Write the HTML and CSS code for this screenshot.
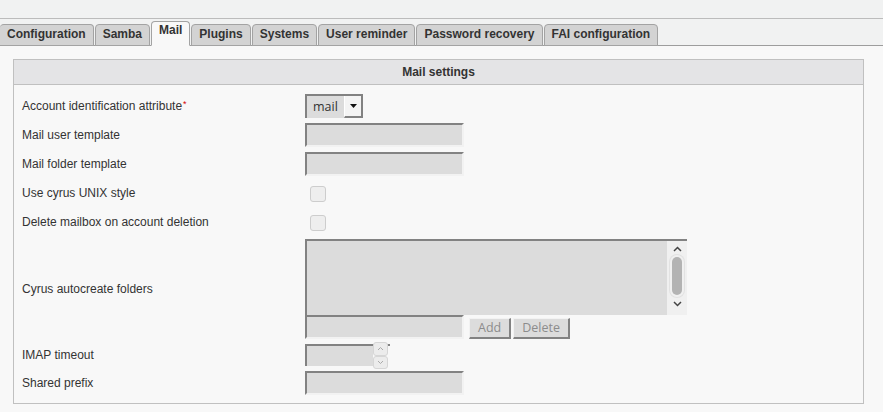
FILE: index.html
```html
<!DOCTYPE html>
<html>
<head>
    <title>Mail settings</title>
    <link rel="stylesheet" href="styles.css">
</head>
<body>
    <div class="topbar"></div>

    <div class="tabs">
      <div class="tab">Configuration</div>
      <div class="tab">Samba</div>
      <div class="tab active">Mail</div>
      <div class="tab">Plugins</div>
      <div class="tab">Systems</div>
      <div class="tab">User reminder</div>
      <div class="tab">Password recovery</div>
      <div class="tab">FAI configuration</div>
    </div>

    <div class="panel">
      <div class="panel-head">Mail settings</div>
      <div class="panel-body">

        <div class="row">
          <div class="label">Account identification attribute<span class="req">*</span></div>
          <div class="field">
            <div class="select">
              <span class="select-value">mail</span>
              <span class="select-btn">
                <svg width="7" height="4" viewBox="0 0 7 4"><path d="M0 0 L7 0 L3.5 4 Z" fill="#111"/></svg>
              </span>
            </div>
          </div>
        </div>

        <div class="row">
          <div class="label">Mail user template</div>
          <div class="field"><div class="input"></div></div>
        </div>

        <div class="row">
          <div class="label">Mail folder template</div>
          <div class="field"><div class="input"></div></div>
        </div>

        <div class="row">
          <div class="label">Use cyrus UNIX style</div>
          <div class="field"><div class="check"></div></div>
        </div>

        <div class="row">
          <div class="label">Delete mailbox on account deletion</div>
          <div class="field"><div class="check"></div></div>
        </div>

        <div class="row row--tall">
          <div class="label">Cyrus autocreate folders</div>
          <div class="field field--stack">
            <div class="textarea">
              <div class="scrollbar">
                <svg class="chev" width="9" height="6" viewBox="0 0 9 6"><path d="M1 5 L4.5 1.5 L8 5" fill="none" stroke="#444" stroke-width="1.5"/></svg>
                <span class="thumb"></span>
                <svg class="chev chev--down" width="9" height="6" viewBox="0 0 9 6"><path d="M1 1 L4.5 4.5 L8 1" fill="none" stroke="#444" stroke-width="1.5"/></svg>
              </div>
            </div>
            <div class="addline">
              <div class="input"></div>
              <span class="btn">Add</span>
              <span class="btn">Delete</span>
            </div>
          </div>
        </div>

        <div class="row row--short">
          <div class="label">IMAP timeout</div>
          <div class="field">
            <div class="number">
              <div class="number-box"></div>
              <div class="spin">
                <span class="spin-btn">
                  <svg width="7" height="5" viewBox="0 0 7 5"><path d="M1 4 L3.5 1.5 L6 4" fill="none" stroke="#aaa" stroke-width="1"/></svg>
                </span>
                <span class="spin-btn">
                  <svg width="7" height="5" viewBox="0 0 7 5"><path d="M1 1 L3.5 3.5 L6 1" fill="none" stroke="#aaa" stroke-width="1"/></svg>
                </span>
              </div>
            </div>
          </div>
        </div>

        <div class="row">
          <div class="label">Shared prefix</div>
          <div class="field"><div class="input"></div></div>
        </div>

      </div>
    </div>
</body>
</html>
```

FILE: styles.css
```css
html, body {
  margin: 0;
}

body {
  background-color: #f8f8f8;
  font-family: "Liberation Sans", Arial, sans-serif;
  font-size: 12px;
  color: #333;
}

.topbar {
  height: 18px;
  background-color: #f1f2f2;
  border-bottom: 1px solid #bcbcbc;
}

/* tab strip */

.tabs {
  display: flex;
  align-items: flex-end;
  height: 26px;
  background-color: #f1f2f2;
  border-bottom: 1px solid #9d9d9d;
}

.tab {
  height: 20px;
  line-height: 19px;
  padding: 0 7px;
  margin-bottom: -1px;
  margin-right: 1px;
  background-color: #d3d3d3;
  border: 1px solid #a3a3a3;
  border-radius: 4px 4px 0 0;
  font-weight: bold;
  color: #333;
  white-space: nowrap;
}

.tab:first-child {
  border-left: 0;
  padding-left: 7px;
}

.tab.active {
  height: 23px;
  line-height: 17px;
  background-color: #f8f8f8;
  border-bottom-color: #f8f8f8;
}

/* settings panel */

.panel {
  margin: 13px 19px 0 13px;
  border: 1px solid #c0c0c0;
}

.panel-head {
  height: 24px;
  line-height: 24px;
  text-align: center;
  font-weight: bold;
  background-color: #e4e4e6;
  border-bottom: 1px solid #c0c0c0;
}

.panel-body {
  display: flex;
  flex-direction: column;
  gap: 5px;
  padding: 9px 0 8px 8px;
}

.row {
  display: flex;
  align-items: center;
  height: 24px;
}

.row--tall {
  height: 100px;
}

.row--short {
  height: 22px;
}

.label {
  width: 283px;
}

.req {
  color: #d40000;
  font-size: 9px;
  vertical-align: top;
  margin-left: 1px;
}

.field {
  display: flex;
  align-items: center;
}

.field--stack {
  flex-direction: column;
  align-items: flex-start;
}

/* form controls */

.input,
.select,
.textarea,
.number-box {
  box-sizing: border-box;
  background-color: #dcdcdc;
  border-style: solid;
  border-width: 2px;
  border-color: #828282 #f2f2f2 #f2f2f2 #828282;
}

.input {
  width: 159px;
  height: 24px;
}

.select {
  display: flex;
  width: 58px;
  height: 24px;
  border-right: 0;
  border-bottom: 0;
  font-family: "Open Sans", sans-serif;
  font-size: 12.5px;
  color: #333;
}

.select-value {
  flex: 1;
  line-height: 21px;
  padding-left: 6px;
}

.select-btn {
  box-sizing: border-box;
  display: flex;
  align-items: center;
  justify-content: center;
  width: 19px;
  background-color: #f4f4f4;
  border-left: 1px solid #ffffff;
  border-right: 2px solid #828282;
  border-bottom: 2px solid #828282;
}

.check {
  width: 14px;
  height: 14px;
  margin-left: 5px;
  margin-top: 1px;
  background-color: #eeeeee;
  border: 1px solid #cdcdcd;
  border-radius: 3px;
}

.textarea {
  position: relative;
  width: 382px;
  height: 76px;
  border-right: 0;
  border-bottom: 0;
}

.scrollbar {
  position: absolute;
  top: 0;
  right: 0;
  bottom: 0;
  width: 20px;
  background-color: #f0f0f0;
  display: flex;
  flex-direction: column;
  align-items: center;
}

.chev {
  display: block;
  margin-top: 5px;
}

.chev--down {
  margin-top: 6px;
}

.thumb {
  width: 10px;
  height: 38px;
  margin-top: 5px;
  background-color: #b3b3b3;
  border-radius: 5px;
  box-shadow: 0 0 0 2px #f0f0f0, 0 0 0 3px #e2e2e2;
}

.addline {
  display: flex;
  align-items: flex-end;
}

.btn {
  box-sizing: border-box;
  height: 21px;
  line-height: 18px;
  padding: 0 8px;
  margin-left: 2px;
  background-color: #dcdcdc;
  border-style: solid;
  border-width: 1px 2px 2px 1px;
  border-color: #f2f2f2 #828282 #828282 #f2f2f2;
  font-family: "Open Sans", sans-serif;
  font-size: 12.5px;
  color: #8c8c8c;
}

.btn:first-of-type {
  margin-left: 5px;
}

.number {
  display: flex;
  align-items: stretch;
  height: 22px;
}

.number-box {
  width: 68px;
  border-right: 0;
  border-bottom: 0;
}

.spin {
  display: flex;
  flex-direction: column;
  width: 17px;
  margin-top: -2px;
  margin-bottom: -3px;
  background: linear-gradient(#828282, #828282) no-repeat 0 2px / 100% 2px;
}

.spin-btn {
  flex: 1;
  display: flex;
  align-items: center;
  justify-content: center;
  box-sizing: border-box;
  width: 15px;
  background-color: #ececec;
  border: 1px solid #d6d6d6;
  border-radius: 3px;
}
```
